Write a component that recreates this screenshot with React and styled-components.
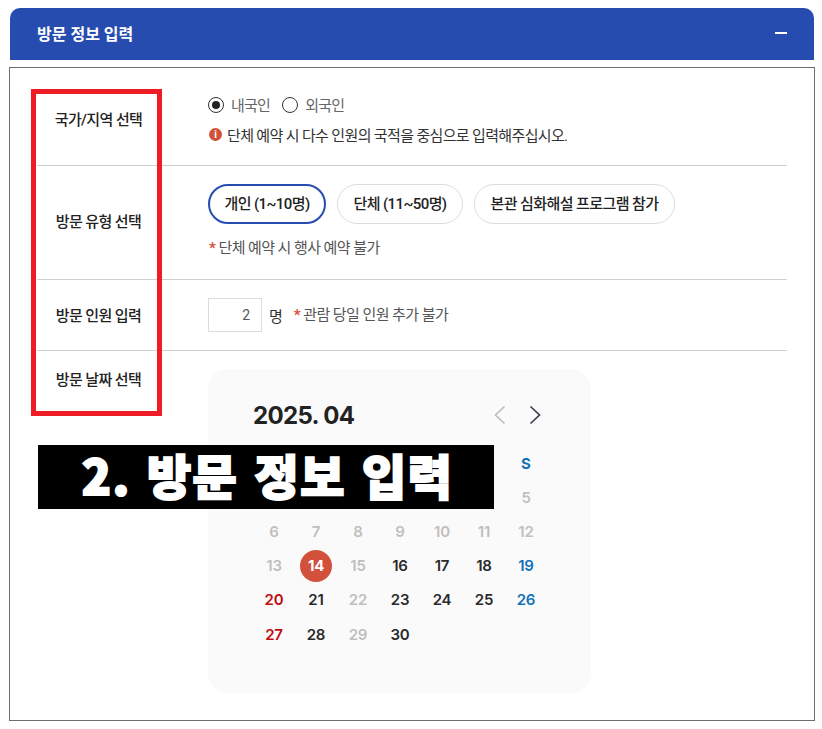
import React from "react";
import styled, { createGlobalStyle } from "styled-components";

const WEEK = ["", "", "", "", "", "", "S"];
const DAYS = [
  [null, null, null, null, null, null, 5],
  [6, 7, 8, 9, 10, 11, 12],
  [13, 14, 15, 16, 17, 18, 19],
  [20, 21, 22, 23, 24, 25, 26],
  [27, 28, 29, 30, null, null, null],
];
const ENABLED = [16, 17, 18, 21, 23, 24, 25, 28, 30];
const BLUE = [19, 26];
const RED = [20, 27];

const toneOf = (day) => {
  if (day === 14) return "today";
  if (BLUE.includes(day)) return "blue";
  if (RED.includes(day)) return "red";
  if (ENABLED.includes(day)) return "normal";
  return "off";
};

const App = () => {
  return (
    <Page>
      <GlobalStyle />
      <Header>
        <HeaderTitle>방문 정보 입력</HeaderTitle>
        <Minus />
      </Header>
      <Panel>
        <Row $pad="17px 0 21px">
          <Label>국가/지역 선택</Label>
          <Value>
            <RadioLine>
              <Radio $checked />
              <RadioText>내국인</RadioText>
              <Radio />
              <RadioText>외국인</RadioText>
            </RadioLine>
            <InfoNote>
              <InfoIcon>i</InfoIcon>
              단체 예약 시 다수 인원의 국적을 중심으로 입력해주십시오.
            </InfoNote>
          </Value>
        </Row>
        <Row $pad="18px 0 21px">
          <Label>방문 유형 선택</Label>
          <Value>
            <Pills>
              <Pill $active $width={118}>개인 (1~10명)</Pill>
              <Pill $width={126}>단체 (11~50명)</Pill>
              <Pill $width={201}>본관 심화해설 프로그램 참가</Pill>
            </Pills>
            <StarNote $top={14} $left={1}>
              <Star>*</Star> 단체 예약 시 행사 예약 불가
            </StarNote>
          </Value>
        </Row>
        <Row $pad="18px 0">
          <Label>방문 인원 입력</Label>
          <CountLine>
            <CountBox>2</CountBox>
            <Unit>명</Unit>
            <StarNote>
              <Star>*</Star> 관람 당일 인원 추가 불가
            </StarNote>
          </CountLine>
        </Row>
        <DateRow>
          <DateLabel>방문 날짜 선택</DateLabel>
          <Calendar>
            <CalendarHead>
              <MonthTitle>2025. 04</MonthTitle>
              <Arrows>
                <svg width="13" height="20" viewBox="0 0 13 20" fill="none" stroke="#bdbdbd" strokeWidth="1.7">
                  <path d="M11.5 1.5 2.5 10l9 8.5" />
                </svg>
                <svg width="13" height="20" viewBox="0 0 13 20" fill="none" stroke="#3a3f4a" strokeWidth="1.7">
                  <path d="M1.5 1.5 10.5 10l-9 8.5" />
                </svg>
              </Arrows>
            </CalendarHead>
            <DayGrid>
              {WEEK.map((w, i) => (
                <WeekCell key={i}>{w}</WeekCell>
              ))}
              {DAYS.flat().map((d, i) => (
                <DayCell key={i} $tone={d ? toneOf(d) : "off"}>
                  {d === 14 ? <TodayDot>{d}</TodayDot> : d}
                </DayCell>
              ))}
            </DayGrid>
          </Calendar>
        </DateRow>
      </Panel>
      <RedFrame />
      <Banner>2. 방문 정보 입력</Banner>
    </Page>
  );
};

const FONT = `Roboto, "Noto Sans CJK KR", sans-serif`;

const GlobalStyle = createGlobalStyle`
  html, body {
    margin: 0;
    background: #fff;
  }
  body {
    font-family: ${FONT};
    color: #222;
  }
`;

const Page = styled.div`
  position: relative;
  width: 822px;
  height: 729px;
  box-sizing: border-box;
  padding: 8px 7px 0 9px;
  overflow: hidden;
`;

const Header = styled.div`
  margin: 0 1px;
  height: 52px;
  box-sizing: border-box;
  padding: 0 27px 2px;
  display: flex;
  align-items: center;
  justify-content: space-between;
  background: #264cb0;
  border-radius: 10px 10px 0 0;
`;

const HeaderTitle = styled.h2`
  margin: 0;
  font-size: 16px;
  font-weight: 700;
  color: #fff;
`;

const Minus = styled.span`
  width: 12px;
  height: 2px;
  background: #fff;
`;

const Panel = styled.div`
  margin-top: 7px;
  height: 654px;
  box-sizing: border-box;
  border: 1px solid #6e6e6e;
  padding: 9px 27px 0;
`;

const Row = styled.div`
  display: flex;
  align-items: center;
  padding: ${({ $pad }) => $pad};
  border-bottom: 1px solid #cfcfcf;
`;

const Label = styled.div`
  width: 123px;
  margin-right: 48px;
  padding-top: 2px;
  flex: none;
  text-align: center;
  font-size: 15px;
  font-weight: 500;
  letter-spacing: -0.6px;
  line-height: 20px;
  color: #222;
`;

const Value = styled.div`
  flex: 1;
`;

const RadioLine = styled.div`
  display: flex;
  align-items: center;
  height: 22px;
`;

const Radio = styled.span`
  position: relative;
  width: 16px;
  height: 16px;
  box-sizing: border-box;
  border: 1px solid #333;
  border-radius: 50%;
  background: #fff;

  &::after {
    content: "";
    display: ${({ $checked }) => ($checked ? "block" : "none")};
    position: absolute;
    inset: 3px;
    border-radius: 50%;
    background: #222;
  }
`;

const RadioText = styled.span`
  margin: -2px 12px 0 7px;
  font-size: 15px;
  letter-spacing: -0.75px;
  color: #666;
`;

const InfoNote = styled.div`
  margin-top: 8px;
  height: 20px;
  display: flex;
  align-items: center;
  gap: 5px;
  font-size: 15px;
  letter-spacing: -0.65px;
  color: #333;
`;

const InfoIcon = styled.span`
  width: 13px;
  height: 13px;
  margin-left: 1px;
  flex: none;
  border-radius: 50%;
  background: #d2513a;
  color: #fff;
  font-size: 10px;
  font-weight: 700;
  line-height: 13px;
  text-align: center;
  letter-spacing: 0;
`;

const Pills = styled.div`
  display: flex;
  gap: 11px;
`;

const Pill = styled.div`
  width: ${({ $width }) => $width}px;
  height: 40px;
  box-sizing: border-box;
  padding-bottom: 4px;
  display: flex;
  align-items: center;
  justify-content: center;
  border-radius: 20px;
  border: ${({ $active }) => ($active ? "2px solid #264cb0" : "1px solid #dedede")};
  background: #fff;
  font-size: 15px;
  font-weight: 500;
  letter-spacing: -0.6px;
  color: #222;
`;

const StarNote = styled.div`
  margin-top: ${({ $top }) => $top || 0}px;
  margin-left: ${({ $left }) => $left || 0}px;
  font-size: 15px;
  letter-spacing: -0.57px;
  line-height: 20px;
  color: #555;
`;

const Star = styled.span`
  color: #d2513a;
  font-weight: 700;
`;

const CountLine = styled.div`
  display: flex;
  align-items: center;
`;

const CountBox = styled.div`
  width: 54px;
  height: 34px;
  box-sizing: border-box;
  padding-right: 11px;
  border: 1px solid #dcdcdc;
  text-align: right;
  line-height: 32px;
  font-size: 14px;
  color: #555;
`;

const Unit = styled.span`
  margin: 0 11px 0 7px;
  font-size: 15px;
  color: #333;
`;

const DateRow = styled.div`
  display: flex;
  align-items: flex-start;
  padding-top: 18px;
`;

const DateLabel = styled(Label)`
  padding-top: 1px;
`;

const Calendar = styled.div`
  width: 383px;
  height: 324px;
  box-sizing: border-box;
  padding: 30px 45px 0;
  border-radius: 20px;
  background: #fafafa;
`;

const CalendarHead = styled.div`
  display: flex;
  align-items: center;
  justify-content: space-between;
  height: 32px;
`;

const MonthTitle = styled.div`
  font-family: Inter, sans-serif;
  font-size: 24px;
  font-weight: 700;
  letter-spacing: -0.65px;
  color: #222;
`;

const Arrows = styled.div`
  display: flex;
  gap: 23px;
  margin-right: 4px;
  align-items: center;
  line-height: 0;
`;

const DayGrid = styled.div`
  margin-top: 15px;
  display: grid;
  grid-template-columns: repeat(7, 42px);
  grid-auto-rows: 34.2px;
`;

const WeekCell = styled.div`
  display: flex;
  align-items: center;
  justify-content: center;
  font-family: Inter, sans-serif;
  font-size: 15px;
  font-weight: 700;
  color: #1470b8;
`;

const TONES = {
  off: "#bfbfbf",
  normal: "#2a2a2a",
  blue: "#1470b8",
  red: "#c00d0d",
  today: "#fff",
};

const DayCell = styled.div`
  display: flex;
  align-items: center;
  justify-content: center;
  font-family: Inter, sans-serif;
  font-size: 15px;
  font-weight: 600;
  letter-spacing: -0.2px;
  color: ${({ $tone }) => TONES[$tone]};
`;

const TodayDot = styled.span`
  width: 32px;
  height: 32px;
  display: flex;
  align-items: center;
  justify-content: center;
  border-radius: 50%;
  background: #d2513a;
  font-weight: 700;
`;

const RedFrame = styled.div`
  position: absolute;
  left: 31px;
  top: 89px;
  width: 131px;
  height: 327px;
  box-sizing: border-box;
  border: 5px solid #ee1c25;
  pointer-events: none;
`;

const Banner = styled.div`
  position: absolute;
  left: 38px;
  top: 445px;
  width: 456px;
  height: 64px;
  padding: 0 0 6px 3px;
  box-sizing: border-box;
  display: flex;
  align-items: center;
  justify-content: center;
  background: #000;
  color: #fff;
  font-family: "Noto Sans CJK KR", sans-serif;
  font-size: 48px;
  font-weight: 900;
  letter-spacing: 1.4px;
  word-spacing: 4px;
  -webkit-text-stroke: 2px #fff;
  white-space: nowrap;
`;

export default App;
